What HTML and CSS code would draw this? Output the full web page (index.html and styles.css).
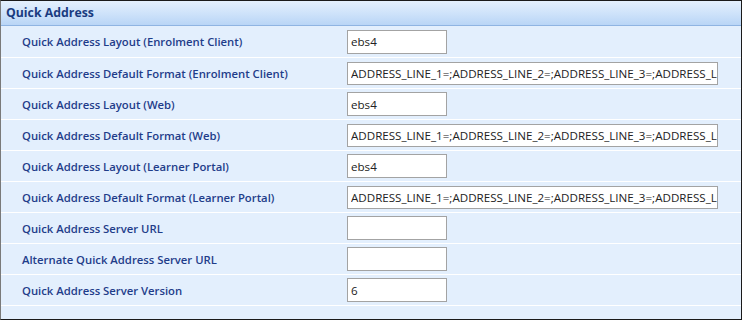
FILE: index.html
```html
<!DOCTYPE html>
<html>
<head>
<meta charset="utf-8">
<link rel="stylesheet" href="styles.css">
</head>
<body>
<div class="panel">
  <div class="panel-head">Quick Address</div>
  <div class="rows">
    <div class="row"><span class="label">Quick Address Layout (Enrolment Client)</span><input class="field short" type="text" value="ebs4" readonly></div>
    <div class="row"><span class="label">Quick Address Default Format (Enrolment Client)</span><input class="field long" type="text" value="ADDRESS_LINE_1=;ADDRESS_LINE_2=;ADDRESS_LINE_3=;ADDRESS_LINE_4=;POSTCODE=" readonly></div>
    <div class="row"><span class="label">Quick Address Layout (Web)</span><input class="field short" type="text" value="ebs4" readonly></div>
    <div class="row"><span class="label">Quick Address Default Format (Web)</span><input class="field long" type="text" value="ADDRESS_LINE_1=;ADDRESS_LINE_2=;ADDRESS_LINE_3=;ADDRESS_LINE_4=;POSTCODE=" readonly></div>
    <div class="row"><span class="label">Quick Address Layout (Learner Portal)</span><input class="field short" type="text" value="ebs4" readonly></div>
    <div class="row"><span class="label">Quick Address Default Format (Learner Portal)</span><input class="field long" type="text" value="ADDRESS_LINE_1=;ADDRESS_LINE_2=;ADDRESS_LINE_3=;ADDRESS_LINE_4=;POSTCODE=" readonly></div>
    <div class="row"><span class="label">Quick Address Server URL</span><input class="field short" type="text" value="" readonly></div>
    <div class="row"><span class="label">Alternate Quick Address Server URL</span><input class="field short" type="text" value="" readonly></div>
    <div class="row"><span class="label">Quick Address Server Version</span><input class="field short" type="text" value="6" readonly></div>
  </div>
</div>
</body>
</html>
```

FILE: styles.css
```css
html, body {
  margin: 0;
  padding: 0;
  background: #ffffff;
}
.panel {
  width: 742px;
  height: 320px;
  box-sizing: border-box;
  border-top: 1px solid #1a1a1a;
  border-right: 1px solid #1a1a1a;
  border-bottom: 1px solid #1a1a1a;
  border-left: 1px solid #7a7a7a;
  background: #e3effd;
  font-family: "Open Sans", "Liberation Sans", sans-serif;
  overflow: hidden;
}
.panel-head {
  height: 25px;
  box-sizing: border-box;
  border-bottom: 1px solid #8fb4e2;
  background: linear-gradient(to bottom, #e4f0fd 0%, #cfe3fa 50%, #b9d5f6 100%);
  color: #1a3b80;
  font-weight: 700;
  font-size: 12.3px;
  line-height: 24px;
  padding-left: 5px;
}
.rows {
  display: flex;
  flex-direction: column;
  padding-bottom: 13px;
}
.row {
  display: flex;
  align-items: center;
  height: 31px;
  box-sizing: border-box;
  border-bottom: 1px solid #ffffff;
}
.row:first-child {
  height: 32px;
}
.label {
  width: 346px;
  flex: none;
  box-sizing: border-box;
  padding-left: 21px;
  color: #1f3d8a;
  font-weight: 600;
  font-size: 11.3px;
  white-space: nowrap;
}
.field {
  display: block;
  margin: 0;
  box-sizing: border-box;
  background: #ffffff;
  border: 1px solid #a3a3a3;
  border-radius: 0;
  outline: none;
  color: #222222;
  font-family: "Open Sans", "Liberation Sans", sans-serif;
  font-size: 11.6px;
  padding: 0 0 0 3px;
}
.short {
  width: 100px;
  height: 24px;
}
.long {
  width: 371px;
  height: 23px;
}
```
